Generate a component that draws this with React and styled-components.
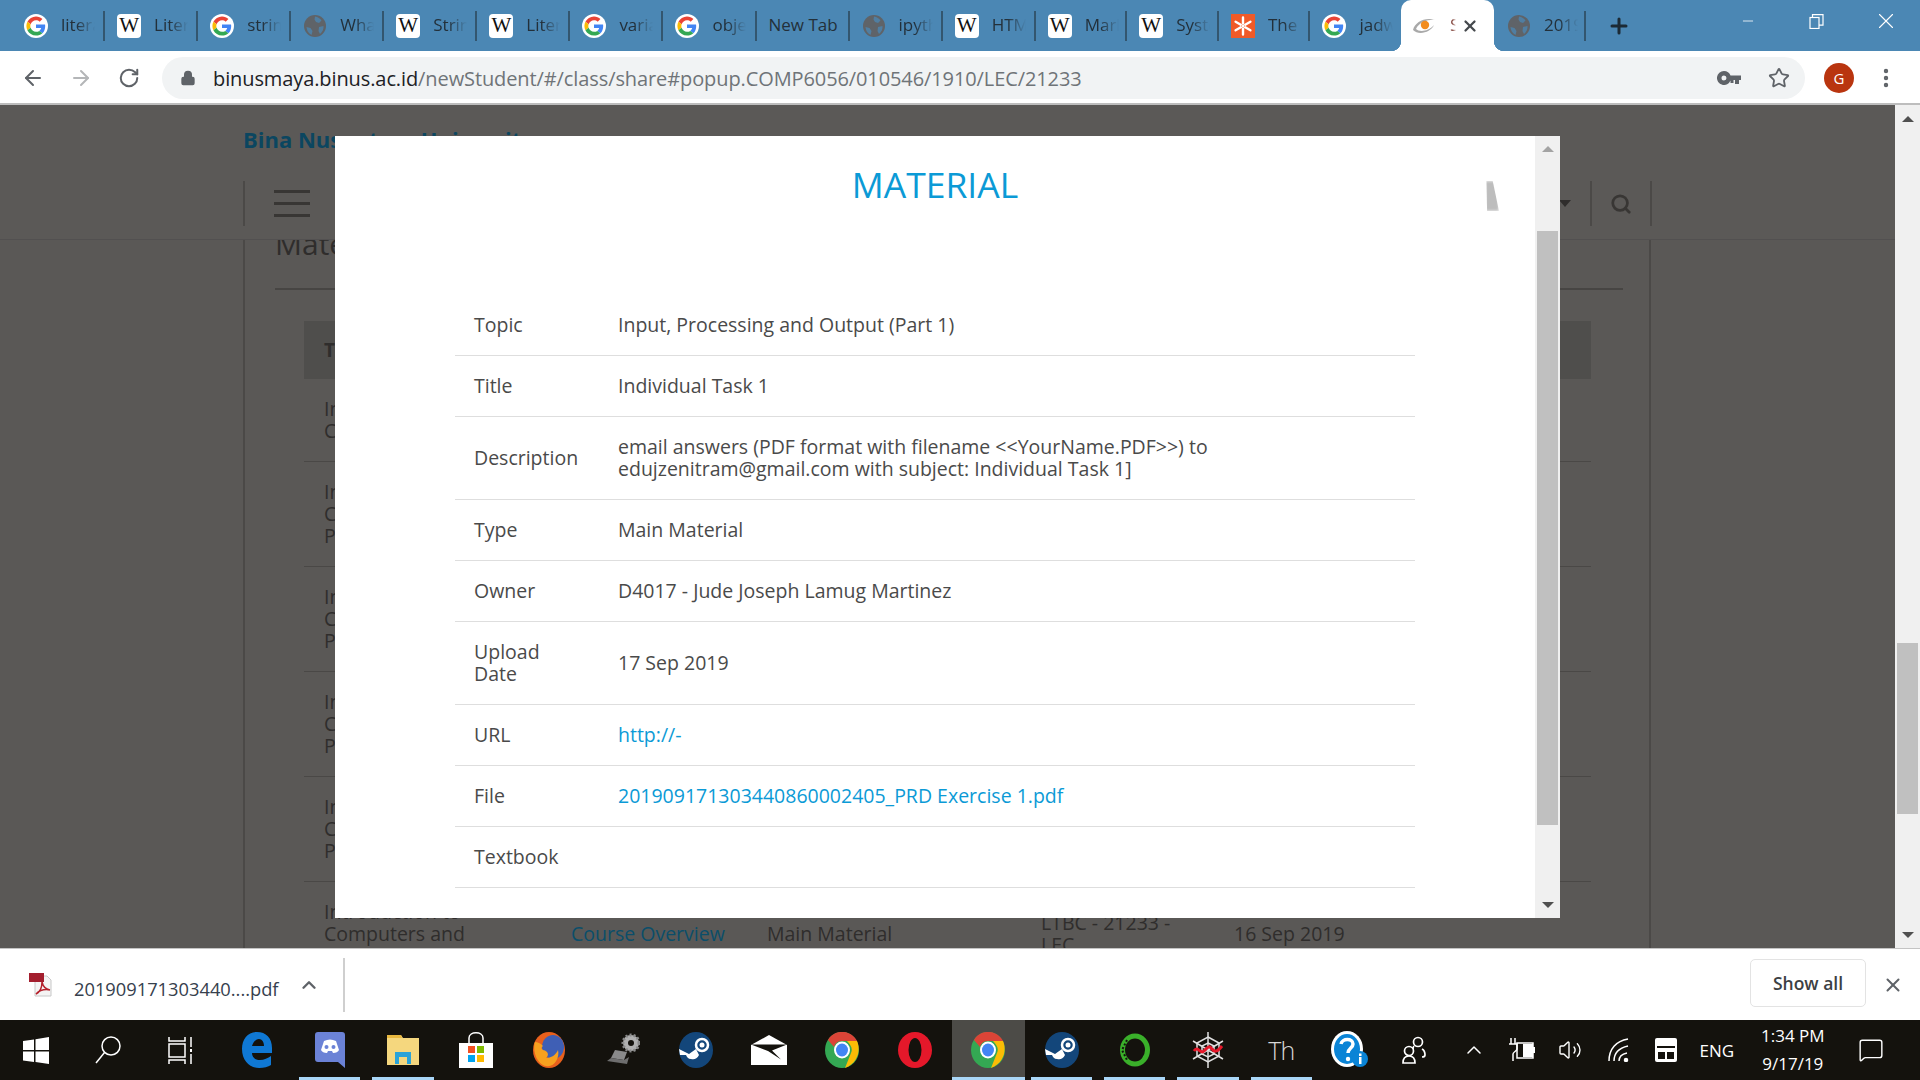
import React from 'react';
import styled, { createGlobalStyle } from 'styled-components';
import { ArrowLeft, ArrowRight, RotateCw, Lock, Star, X, Plus, Minus, ChevronUp, MoreVertical, Search, Volume2, MessageSquare } from 'lucide-react';

const GlobalStyle = createGlobalStyle`
    html, body {
        margin: 0;
        padding: 0;
        width: 1920px;
        height: 1080px;
        overflow: hidden;
        font-family: "Open Sans", "Noto Sans", sans-serif;
    }
    * { box-sizing: border-box; }
`;

const Screen = styled.div`
    display: flex;
    flex-direction: column;
    width: 1920px;
    height: 1080px;
`;

/* ---------- browser tabs ---------- */

const TabStrip = styled.div`
    display: flex;
    align-items: stretch;
    height: 51px;
    padding-left: 12px;
    background: #4b87b4;
    color: #23303a;
`;

const Tab = styled.div`
    display: flex;
    align-items: center;
    flex: none;
    width: ${p => p.$w}px;
    padding-left: 12px;
    font-size: 17px;
    white-space: nowrap;
    position: relative;

    &::after {
        content: '';
        position: absolute;
        right: 0;
        top: 11px;
        bottom: 10px;
        width: 2px;
        background: ${p => p.$noSep ? 'transparent' : '#33566f'};
    }
`;

const ActiveTab = styled.div`
    display: flex;
    align-items: center;
    flex: none;
    width: 93px;
    margin-left: -1px;
    margin-right: 1px;
    padding-left: 10px;
    background: #fff;
    border-radius: 10px 10px 0 0;
    position: relative;
    font-size: 17px;
    color: #8a5048;

    &::before, &::after {
        content: '';
        position: absolute;
        bottom: 0;
        width: 10px;
        height: 10px;
    }
    &::before {
        left: -10px;
        background: radial-gradient(circle at 0 0, #4b87b4 10px, #fff 10.5px);
    }
    &::after {
        right: -10px;
        background: radial-gradient(circle at 100% 0, #4b87b4 10px, #fff 10.5px);
    }
`;

const TabText = styled.span`
    display: block;
    flex: none;
    width: ${p => p.$w || 34}px;
    margin-left: ${p => p.$noIcon ? 0 : 13}px;
    padding-bottom: 2px;
    overflow: hidden;
    -webkit-mask-image: ${p => p.$noFade ? 'none' : 'linear-gradient(to right, #000 45%, transparent 100%)'};
`;

const NewTabButton = styled.div`
    display: flex;
    align-items: center;
    margin-left: 21px;
    color: #1c2a35;
`;

const WindowControls = styled.div`
    display: flex;
    align-items: center;
    margin-left: auto;
    padding-bottom: 9px;
    color: #fff;
`;

const WindowButton = styled.div`
    display: flex;
    justify-content: center;
    width: 69px;
`;

const WikiIcon = styled.span`
    display: flex;
    align-items: center;
    justify-content: center;
    flex: none;
    width: 24px;
    height: 24px;
    background: #fff;
    border-radius: 4px;
    color: #111;
    font-family: "Liberation Serif", serif;
    font-size: 21px;
    line-height: 1;
`;

const GoogleIcon = ({ size = 24 }) => (
    <svg width={size} height={size} viewBox="-6 -6 60 60" style={{ flex: 'none' }}>
        <circle cx="24" cy="24" r="30" fill="#fff" />
        <path fill="#EA4335" d="M24 9.5c3.54 0 6.71 1.22 9.21 3.6l6.85-6.85C35.9 2.38 30.47 0 24 0 14.62 0 6.51 5.38 2.56 13.22l7.98 6.19C12.43 13.72 17.74 9.5 24 9.5z" />
        <path fill="#4285F4" d="M46.98 24.55c0-1.57-.15-3.09-.38-4.55H24v9.02h12.94c-.58 2.96-2.26 5.48-4.78 7.18l7.73 6c4.51-4.18 7.09-10.36 7.09-17.65z" />
        <path fill="#FBBC05" d="M10.53 28.59c-.48-1.45-.76-2.99-.76-4.59s.27-3.14.76-4.59l-7.98-6.19C.92 16.46 0 20.12 0 24c0 3.88.92 7.54 2.56 10.78l7.97-6.19z" />
        <path fill="#34A853" d="M24 48c6.48 0 11.93-2.13 15.89-5.81l-7.73-6c-2.15 1.45-4.92 2.3-8.16 2.3-6.26 0-11.57-4.22-13.47-9.91l-7.98 6.19C6.51 42.62 14.62 48 24 48z" />
    </svg>
);

const GlobeIcon = () => (
    <svg width="24" height="24" viewBox="0 0 24 24" style={{ flex: 'none' }}>
        <circle cx="12" cy="12" r="11" fill="#5f6368" />
        <path d="M12 2.500c3 .6 5 2 6.500 4l-2.500 2.500-3-1-1.500-2.500zM16 13l4.500-1c.3 3-1 6-3.500 8l-1.500-3zM3.500 13l4 1 2 3-1 4c-3-1.500-4.800-4.500-5-8z" fill="#4b87b4" opacity="0.75" />
    </svg>
);

const SnowflakeIcon = () => (
    <svg width="24" height="24" viewBox="0 0 24 24" style={{ flex: 'none' }}>
        <rect width="24" height="24" fill="#f05a28" />
        <path d="M12 3.500v6M12 14.500v6M4.600 7.700l5.200 3M14.200 13.300l5.200 3M19.400 7.700l-5.200 3M9.800 13.300l-5.200 3" stroke="#fff" strokeWidth="2.400" strokeLinecap="round" />
        <circle cx="12" cy="12" r="1.200" fill="#fff" />
    </svg>
);

const BinusIcon = () => (
    <svg width="26" height="24" viewBox="0 0 26 24" style={{ flex: 'none' }}>
        <path d="M2 16C4 8 14 3 24 6c-6-1-16 2-19 9 3 3 12 3 18-4-3 7-15 11-21 5z" fill="#a9a9a9" />
        <circle cx="14" cy="11" r="4.200" fill="#f28c1e" />
    </svg>
);

const tabs = [
    { icon: 'g', text: 'literal' }, { icon: 'w', text: 'Literal' }, { icon: 'g', text: 'string' },
    { icon: 'o', text: 'What' }, { icon: 'w', text: 'String' }, { icon: 'w', text: 'Literal' },
    { icon: 'g', text: 'variable' }, { icon: 'g', text: 'object' }, { text: 'New Tab' },
    { icon: 'o', text: 'ipython' }, { icon: 'w', text: 'HTML' }, { icon: 'w', text: 'Markup', n: 1 },
    { icon: 'w', text: 'System', n: 1 }, { icon: 's', text: 'The', n: 1 }, { icon: 'g', text: 'jadwal', n: 1, noSep: true },
];

const TabIcon = ({ kind }) => {
    if (kind === 'g') return <GoogleIcon />;
    if (kind === 'w') return <WikiIcon>W</WikiIcon>;
    if (kind === 'o') return <GlobeIcon />;
    if (kind === 's') return <SnowflakeIcon />;
    return null;
};

/* ---------- address bar ---------- */

const Toolbar = styled.div`
    display: flex;
    align-items: center;
    height: 54px;
    padding: 2px 0 0 9px;
    background: #fff;
    border-bottom: 2px solid #bdbdbd;
`;

const NavButton = styled.div`
    display: flex;
    justify-content: center;
    width: 48px;
    color: ${p => p.$off ? '#b4b6b8' : '#5f6368'};
`;

const Omnibox = styled.div`
    display: flex;
    align-items: center;
    width: 1643px;
    height: 42px;
    margin-left: 9px;
    padding: 0 15px 0 18px;
    border-radius: 21px;
    background: #f1f3f4;
    color: #5f6368;
`;

const Url = styled.div`
    margin-left: 17px;
    font-size: 20px;
    letter-spacing: -0.1px;
    color: #6f7478;
    white-space: nowrap;

    b {
        font-weight: 400;
        color: #202124;
    }
`;

const OmniboxIcons = styled.div`
    display: flex;
    align-items: center;
    gap: 27px;
    margin-left: auto;
`;

const Avatar = styled.div`
    display: flex;
    align-items: center;
    justify-content: center;
    width: 30px;
    height: 30px;
    margin-left: 19px;
    border-radius: 50%;
    background: #b9350f;
    color: #fff;
    font-size: 15px;
`;

const Kebab = styled.div`
    display: flex;
    margin-left: 20px;
    color: #5f6368;
`;

/* ---------- dimmed page behind the modal ---------- */

const PageArea = styled.div`
    display: flex;
    flex: 1;
    min-height: 0;
    position: relative;
`;

const PageBody = styled.div`
    display: flex;
    flex-direction: column;
    flex: 1;
    min-width: 0;
    overflow: hidden;
    background: #5a5856;
    color: #2f2d2c;
`;

const SiteHeader = styled.div`
    flex: none;
    height: 135px;
    padding: 20px 0 0 243px;
    position: relative;
    z-index: 1;
    background: #5b5957;
    border-bottom: 1px solid #525050;
`;

const Brand = styled.div`
    font-size: 22px;
    font-weight: 700;
    line-height: 28px;
    color: #0b4660;
`;

const HeaderBar = styled.div`
    display: flex;
    align-items: center;
    height: 45px;
    margin-top: 28px;
`;

const HeaderSep = styled.div`
    flex: none;
    width: 2px;
    height: 45px;
    margin-left: ${p => p.$ml || 0}px;
    background: #4b4947;
`;

const Burger = styled.div`
    display: flex;
    flex-direction: column;
    justify-content: space-between;
    width: 36px;
    height: 27px;
    margin-left: 29px;

    i {
        display: block;
        height: 3px;
        background: #383634;
    }
`;

const Caret = styled.div`
    width: 0;
    height: 0;
    margin-left: 1249px;
    border-left: 6px solid transparent;
    border-right: 6px solid transparent;
    border-top: 7px solid #2f2d2c;
`;

const HeaderIcon = styled.div`
    display: flex;
    margin: 0 18px 0 18px;
    color: #383634;
`;

const Content = styled.div`
    flex: 1;
    width: 1408px;
    margin-left: 243px;
    padding: 0 26px 0 30px;
    border-left: 2px solid #4b4947;
    border-right: 2px solid #4b4947;
`;

const Heading = styled.div`
    margin-top: -25px;
    padding-bottom: 15px;
    font-size: 30px;
    line-height: 58px;
    color: #2f2d2c;
    border-bottom: 2px solid #474543;
`;

const MaterialTable = styled.div`
    width: 1287px;
    margin: 31px 0 0 29px;
`;

const TableHead = styled.div`
    display: flex;
    align-items: center;
    height: 58px;
    padding-left: 20px;
    background: #4f4e4c;
    font-size: 19px;
    font-weight: 700;
`;

const TableRow = styled.div`
    display: grid;
    grid-template-columns: 247px 196px 274px 193px 1fr;
    align-items: center;
    height: ${p => p.$h}px;
    padding-left: 20px;
    border-bottom: 1px solid #4a4846;
    font-size: 19.5px;
    line-height: 22px;
`;

const TopicCell = styled.div`
    width: 150px;
`;

const PageLink = styled.span`
    color: #0b4e6a;
`;

const Scrollbar = styled.div`
    display: flex;
    flex-direction: column;
    align-items: center;
    flex: none;
    width: 25px;
    background: #f0f0f0;
    position: relative;
`;

const Thumb = styled.div`
    position: absolute;
    left: 2px;
    right: 2px;
    top: ${p => p.$top}px;
    height: ${p => p.$h}px;
    background: #c0c0c0;
`;

const Arrow = styled.div`
    position: absolute;
    ${p => p.$up ? 'top' : 'bottom'}: ${p => p.$at}px;
    width: 0;
    height: 0;
    border-left: 6px solid transparent;
    border-right: 6px solid transparent;
    ${p => p.$up ? 'border-bottom' : 'border-top'}: 6px solid ${p => p.$c};
`;

/* ---------- modal ---------- */

const Modal = styled.div`
    display: flex;
    position: absolute;
    left: 335px;
    top: 31px;
    width: 1225px;
    height: 782px;
    z-index: 2;
    background: #fff;
    color: #4a4a4a;
`;

const ModalBody = styled.div`
    flex: 1;
    padding: 23px 120px 0;
    position: relative;
`;

const ModalTitle = styled.h1`
    margin: 0 0 86px;
    font-size: 35.5px;
    font-weight: 400;
    line-height: 50px;
    text-align: center;
    color: #0b9ad6;
`;

const CloseGhost = styled.div`
    position: absolute;
    left: 1150px;
    top: 45px;
    width: 14px;
    height: 30px;
    background: #bdbdbd;
    clip-path: polygon(10% 0, 55% 0, 100% 100%, 15% 100%);
    filter: blur(1.5px);
`;

const Row = styled.div`
    display: grid;
    grid-template-columns: 163px 1fr;
    align-items: center;
    padding: 19px 0;
    border-bottom: 1px solid #dedede;
    font-size: 19.5px;
    line-height: 22px;
`;

const Label = styled.div`
    padding: 0 45px 0 19px;
`;

const Value = styled.div`
    max-width: 640px;
`;

const FileLink = styled.a`
    color: #0b9ad6;
    text-decoration: none;
`;

const details = [
    ['Topic', 'Input, Processing and Output (Part 1)'],
    ['Title', 'Individual Task 1'],
    ['Description', 'email answers (PDF format with filename <<YourName.PDF>>) to edujzenitram@gmail.com with subject: Individual Task 1]'],
    ['Type', 'Main Material'],
    ['Owner', 'D4017 - Jude Joseph Lamug Martinez'],
    ['Upload Date', '17 Sep 2019'],
    ['URL', 'http://-', true],
    ['File', '201909171303440860002405_PRD Exercise 1.pdf', true],
    ['Textbook', ''],
];

/* ---------- download bar ---------- */

const DownloadBar = styled.div`
    display: flex;
    align-items: center;
    flex: none;
    height: 72px;
    background: #fff;
    color: #3c4043;
    border-top: 1px solid #c4c4c4;
`;

const DownloadItem = styled.div`
    display: flex;
    align-items: center;
    width: 345px;
    height: 54px;
    padding-left: 29px;
    border-right: 2px solid #cfcfcf;
    font-size: 18.3px;
`;

const DownloadName = styled.span`
    margin-left: 21px;
    color: #36404d;
    padding-top: 8px;
`;

const DownloadChevron = styled.span`
    display: flex;
    margin-left: 19px;
    color: #5f6368;
`;

const ShowAll = styled.button`
    width: 116px;
    height: 48px;
    margin: 0 0 3px auto;
    border: 1px solid #e3e3e3;
    border-radius: 5px;
    background: #fff;
    color: #3c4043;
    font-family: inherit;
    font-size: 17.5px;
    font-weight: 600;
`;

const DownloadClose = styled.div`
    display: flex;
    justify-content: center;
    width: 54px;
    color: #5f6368;
`;

/* ---------- windows taskbar ---------- */

const Taskbar = styled.div`
    display: flex;
    align-items: center;
    flex: none;
    height: 60px;
    background: #14120d;
    color: #fff;
`;

const TaskSlot = styled.div`
    display: flex;
    align-items: center;
    justify-content: center;
    flex: none;
    width: ${p => p.$w || 73.2}px;
    height: 60px;
    position: relative;
    background: ${p => p.$active ? '#4c4b47' : 'transparent'};

    &::after {
        content: '';
        display: ${p => p.$running ? 'block' : 'none'};
        position: absolute;
        bottom: 0;
        left: ${p => p.$active ? 0 : 6}px;
        right: ${p => p.$active ? 0 : 6}px;
        height: 3px;
        background: #a9d6f7;
    }
`;

const TaskGap = styled.div`
    flex: none;
    width: 4px;
`;

const ThLabel = styled.span`
    font-size: 25px;
    font-weight: 300;
    letter-spacing: -1px;
    color: #d8d8d8;
`;

const TrayText = styled.span`
    font-size: 17px;
    white-space: nowrap;
`;

const Clock = styled.div`
    display: flex;
    flex-direction: column;
    align-items: center;
    gap: 6px;
    font-size: 17px;
    line-height: 22px;
`;

const KeyGlyph = () => (
    <svg width="24" height="14" viewBox="0 0 24 14" fill="#5f6368"><path fillRule="evenodd" d="M7 0a7 7 0 0 1 6.500 4.500H24V9h-2v4h-4V9h-1.500v3h-3V9.500A7 7 0 1 1 7 0zm0 4.500a2.500 2.500 0 1 0 0 5 2.500 2.500 0 0 0 0-5z" /></svg>
);
const WinLogo = () => (
    <svg width="26" height="27" viewBox="0 0 26 27"><path fill="#fff" d="M0 4l11-1.600V13H0zM12.500 2.200L26 0v13H12.500zM0 14.500h11v10.600L0 23.500zM12.500 14.500H26V27l-13.500-2z" /></svg>
);
const SearchGlyph = () => (
    <svg width="26" height="28" viewBox="0 0 26 28" fill="none" stroke="#fff" strokeWidth="1.500"><circle cx="16" cy="10" r="9" /><path d="M9.500 16.500L1 27" /></svg>
);
const TaskView = () => (
    <svg width="24" height="27" viewBox="0 0 24 27" fill="none" stroke="#fff" strokeWidth="1.500"><path d="M1 0v4h16V0M1 27v-4h16v4" /><rect x="1" y="7" width="16" height="13" /><path d="M23 0v10M23 17v10" /><rect x="22" y="12" width="2" height="3" fill="#fff" stroke="none" /></svg>
);
const EdgeLogo = () => (
    <svg width="30" height="36" viewBox="0 0 30 36"><path fill="#0f78d4" d="M15 0C6 0 0 7 0 17c0 12 8 19 17 19 5 0 9-1 12-3v-9c-3 2-7 4-11 4-5 0-8-3-8-7h20v-5C30 6 24 0 15 0zm-5 14c1-4 4-7 7-7 3 0 5 3 5 7z" /></svg>
);
const DiscordLogo = () => (
    <svg width="30" height="36" viewBox="0 0 30 36"><path fill="#6b82d6" d="M3 0h24a3 3 0 0 1 3 3v33l-7-6H3a3 3 0 0 1-3-3V3a3 3 0 0 1 3-3z" /><path fill="#fff" d="M9 9c4-2 8-2 12 0l3 9c-1 2-3 3-6 3l-1-2h-4l-1 2c-3 0-5-1-6-3z" /><circle cx="11.500" cy="15" r="2" fill="#6b82d6" /><circle cx="18.500" cy="15" r="2" fill="#6b82d6" /></svg>
);
const ExplorerLogo = () => (
    <svg width="32" height="30" viewBox="0 0 32 30"><path fill="#f5d77e" d="M0 0h14l2 3h16v27H0z" /><path fill="#e8b83f" d="M0 0h14l1 3H0z" /><path fill="#2aa3d8" d="M8 29V17h16v12h-4v-7h-8v7z" /></svg>
);
const StoreLogo = () => (
    <svg width="34" height="36" viewBox="0 0 34 36"><path fill="none" stroke="#fff" strokeWidth="1.500" d="M10 11V6c0-7 14-7 14 0v5" /><rect y="11" width="34" height="25" fill="#fff" /><rect x="9" y="14" width="7" height="7" fill="#f25022" /><rect x="18" y="14" width="7" height="7" fill="#7fba00" /><rect x="9" y="23" width="7" height="7" fill="#00a4ef" /><rect x="18" y="23" width="7" height="7" fill="#ffb900" /></svg>
);
const FirefoxLogo = () => (
    <svg width="34" height="36" viewBox="0 0 34 36"><ellipse cx="17" cy="18" rx="16" ry="18" fill="#e8601c" /><ellipse cx="21" cy="15" rx="11" ry="12" fill="#3f5fb5" /><path fill="#f7a11f" d="M3 10c3 0 5 1 8 4-2 1-2 3 0 4 6 1 6 6 3 8 5 0 10-3 12-8 2 8-4 18-12 16C6 33 0 20 3 10z" /></svg>
);
const LaptopGear = () => (
    <svg width="34" height="34" viewBox="0 0 34 34"><path fill="#8a8a8a" d="M9 17l12 2-3 8-13-2z" /><path fill="#6e6e6e" d="M5 25l13 2 5-3-2 7-20-3z" /><circle cx="25" cy="10" r="8" fill="#b0b0b0" stroke="#8a8a8a" strokeDasharray="2 2" strokeWidth="3" /><circle cx="25" cy="10" r="3" fill="#14120d" /></svg>
);
const SteamLogo = () => (
    <svg width="34" height="36" viewBox="0 0 34 36"><ellipse cx="17" cy="18" rx="17" ry="18" fill="#13467a" /><circle cx="23" cy="13" r="6" fill="none" stroke="#fff" strokeWidth="2.500" /><circle cx="23" cy="13" r="2.500" fill="#fff" /><path d="M0 17l10 5 7-5 3 6c-2 4-5 5-8 4-3 0-4-2-5-4L1 23z" fill="#fff" /></svg>
);
const MailLogo = () => (
    <svg width="36" height="30" viewBox="0 0 36 30"><path fill="#fff" d="M18 0l18 10v20H0V10z" /><path fill="#14120d" d="M0 9.500h36l-15 6 9 9-13-8.500z" /></svg>
);
const ChromeLogo = () => (
    <svg width="34" height="36" viewBox="0 0 34 36"><ellipse cx="17" cy="18" rx="17" ry="18" fill="#34a853" /><path fill="#db4437" d="M3 8C9-3 26-3 32 9H17c-5 0-7 3-8 6z" /><path fill="#fbbc05" d="M32 9c4 9 1 22-12 27l6-15c2-4 0-8-4-12z" /><ellipse cx="17" cy="18" rx="8" ry="8.500" fill="#fff" /><ellipse cx="17" cy="18" rx="6" ry="6.500" fill="#4285f4" /></svg>
);
const OperaLogo = () => (
    <svg width="34" height="36" viewBox="0 0 34 36"><ellipse cx="17" cy="18" rx="17" ry="18" fill="#e5182a" /><ellipse cx="17" cy="18" rx="6.500" ry="12" fill="#14120d" /></svg>
);
const RingLogo = () => (
    <svg width="32" height="34" viewBox="0 0 32 34"><ellipse cx="16" cy="17" rx="12.500" ry="14" fill="none" stroke="#3ab02a" strokeWidth="5" /><path d="M8 7L3 17l5 10" fill="none" stroke="#14120d" strokeWidth="2" strokeDasharray="2 2" /></svg>
);
const SpiderLogo = () => (
    <svg width="34" height="36" viewBox="0 0 34 36" fill="none" stroke="#e0e0e0" strokeWidth="1.500"><path d="M17 0v36M2 9l30 18M32 9L2 27" /><path d="M17 5l11 6v13l-11 6-11-6V11zM17 11l6 3v8l-6 3-6-3v-8z" /><path d="M3 19c4-6 6 4 10 0s5-6 8-2 6 2 10-3" stroke="#e5182a" strokeWidth="3" /></svg>
);
const HelpLogo = () => (
    <svg width="38" height="38" viewBox="0 0 38 38"><ellipse cx="17" cy="18" rx="16" ry="18" fill="#fff" /><ellipse cx="17" cy="18" rx="13" ry="15" fill="#0a84d6" /><path d="M11 13c1-6 12-6 12 0 0 4-5 4-5 9" fill="none" stroke="#fff" strokeWidth="3.500" /><circle cx="18" cy="28" r="2.200" fill="#fff" /><circle cx="30" cy="28" r="8" fill="#0a84d6" /><rect x="29" y="26" width="2.500" height="7" fill="#fff" /><rect x="29" y="22.500" width="2.500" height="2.500" fill="#fff" /></svg>
);
const PeopleGlyph = () => (
    <svg width="24" height="28" viewBox="0 0 24 28" fill="none" stroke="#fff" strokeWidth="1.700"><circle cx="16" cy="6" r="4.500" /><circle cx="7" cy="15" r="4.500" /><path d="M20 21c2 0 3-1 3-2 0-3-1-5-3-6M12 10c-1 1-1 2-1 3M1 27c0-4 2-7 6-7s6 3 6 7z" /></svg>
);
const BatteryGlyph = () => (
    <svg width="26" height="24" viewBox="0 0 26 24" fill="none" stroke="#fff" strokeWidth="1.500"><path d="M2 0v6M6 0v6M0 6h8v5c0 2-4 3-4 5v7" /><rect x="8" y="5" width="16" height="15" /><rect x="14" y="6" width="10" height="13" fill="#fff" stroke="none" /><rect x="24" y="9" width="2" height="6" fill="#fff" stroke="none" /></svg>
);
const WifiGlyph = () => (
    <svg width="22" height="24" viewBox="0 0 22 24" fill="none" stroke="#fff" strokeWidth="1.500"><path d="M1 23C1 11 8 3 20 1M6 23c0-8 5-13 14-15M11 23c0-4 3-7 8-8" /><circle cx="18" cy="22" r="1.500" fill="#fff" /></svg>
);
const InputBox = () => (
    <svg width="22" height="24" viewBox="0 0 22 24"><rect width="22" height="24" rx="2" fill="#fff" /><rect x="2" y="8" width="18" height="2" fill="#14120d" /><rect x="3" y="14" width="7" height="7" fill="#14120d" /><rect x="12" y="14" width="7" height="7" fill="#14120d" /></svg>
);
const PdfIcon = () => (
    <svg width="24" height="24" viewBox="0 0 24 24" style={{ flex: 'none' }}>
        <path fill="#f4f4f4" stroke="#c8c8c8" d="M6 3h12l4 4v16H6z" />
        <path fill="none" stroke="#b5202b" strokeWidth="1.500" d="M7 21c4-2 6-7 6-12 1 5 3 7 8 8-5-1-10 0-14 4z" />
        <rect x="0" y="0" width="15" height="9" fill="#a31e2e" />
    </svg>
);

const row = [
    { h: 83, t: 'Introduction to Computers' },
    { h: 105, t: 'Introduction to Computers and Programming' },
    { h: 105, t: 'Introduction to Computers and Programming' },
    { h: 105, t: 'Introduction to Computers and Programming' },
    { h: 105, t: 'Introduction to Computers and Programming' },
];

const App = () => {
    return (
        <Screen>
            <GlobalStyle />
            <TabStrip>
                {tabs.map((t, i) => (
                    <Tab key={i} $w={t.n ? 91.6 : 93.07} $noSep={t.noSep}>
                        <TabIcon kind={t.icon} />
                        <TabText $noIcon={!t.icon} $w={t.icon ? 34 : 72} $noFade={!t.icon}>{t.text}</TabText>
                    </Tab>
                ))}
                <ActiveTab>
                    <BinusIcon />
                    <TabText $w={6}>S</TabText>
                    <X size={18} strokeWidth={3} color="#45494d" style={{ marginLeft: 5 }} />
                </ActiveTab>
                <Tab $w={91}>
                    <GlobeIcon />
                    <TabText>2019</TabText>
                </Tab>
                <NewTabButton><Plus size={24} strokeWidth={3} /></NewTabButton>
                <WindowControls>
                    <WindowButton><Minus size={16} strokeWidth={1.2} /></WindowButton>
                    <WindowButton>
                        <svg width="15" height="15" viewBox="0 0 15 15" fill="none" stroke="#fff" strokeWidth="1.200"><rect x="1" y="3.500" width="9" height="11" /><path d="M3.500 3.500V.6H14v10.500h-4" /></svg>
                    </WindowButton>
                    <WindowButton><X size={26} strokeWidth={1} /></WindowButton>
                </WindowControls>
            </TabStrip>

            <Toolbar>
                <NavButton><ArrowLeft size={24} strokeWidth={2} /></NavButton>
                <NavButton $off><ArrowRight size={24} strokeWidth={2} /></NavButton>
                <NavButton><RotateCw size={22} strokeWidth={2.2} /></NavButton>
                <Omnibox>
                    <Lock size={16} fill="#5f6368" />
                    <Url><b>binusmaya.binus.ac.id</b>/newStudent/#/class/share#popup.COMP6056/010546/1910/LEC/21233</Url>
                    <OmniboxIcons>
                        <KeyGlyph />
                        <Star size={22} strokeWidth={2} />
                    </OmniboxIcons>
                </Omnibox>
                <Avatar>G</Avatar>
                <Kebab><MoreVertical size={24} strokeWidth={2.4} /></Kebab>
            </Toolbar>

            <PageArea>
                <PageBody>
                    <SiteHeader>
                        <Brand>Bina Nusantara University</Brand>
                        <HeaderBar>
                            <HeaderSep />
                            <Burger><i /><i /><i /></Burger>
                            <Caret />
                            <HeaderSep $ml={19} />
                            <HeaderIcon><Search size={22} strokeWidth={3} /></HeaderIcon>
                            <HeaderSep />
                        </HeaderBar>
                    </SiteHeader>
                    <Content>
                        <Heading>Material</Heading>
                        <MaterialTable>
                            <TableHead>Topic</TableHead>
                            {row.map((r, i) => (
                                <TableRow key={i} $h={r.h}>
                                    <TopicCell>{r.t}</TopicCell>
                                </TableRow>
                            ))}
                            <TableRow $h={105}>
                                <TopicCell>Introduction to Computers and Programming</TopicCell>
                                <PageLink>Course Overview</PageLink>
                                <span>Main Material</span>
                                <TopicCell>LTBC - 21233 - LEC</TopicCell>
                                <span>16 Sep 2019</span>
                            </TableRow>
                        </MaterialTable>
                    </Content>
                </PageBody>
                <Scrollbar>
                    <Arrow $up $at={11} $c="#505050" />
                    <Thumb $top={538} $h={171} />
                    <Arrow $at={10} $c="#505050" />
                </Scrollbar>

                <Modal>
                    <ModalBody>
                        <ModalTitle>MATERIAL</ModalTitle>
                        <CloseGhost />
                        {details.map(([label, value, link]) => (
                            <Row key={label}>
                                <Label>{label}</Label>
                                <Value>{link ? <FileLink href="#">{value}</FileLink> : (value || '\u00a0')}</Value>
                            </Row>
                        ))}
                    </ModalBody>
                    <Scrollbar>
                        <Arrow $up $at={10} $c="#a3a3a3" />
                        <Thumb $top={95} $h={594} />
                        <Arrow $at={10} $c="#505050" />
                    </Scrollbar>
                </Modal>
            </PageArea>

            <DownloadBar>
                <DownloadItem>
                    <PdfIcon />
                    <DownloadName>201909171303440....pdf</DownloadName>
                    <DownloadChevron><ChevronUp size={22} strokeWidth={2.6} /></DownloadChevron>
                </DownloadItem>
                <ShowAll>Show all</ShowAll>
                <DownloadClose><X size={22} strokeWidth={2.2} /></DownloadClose>
            </DownloadBar>

            <Taskbar>
                <TaskSlot $w={72}><WinLogo /></TaskSlot>
                <TaskSlot $w={72}><SearchGlyph /></TaskSlot>
                <TaskSlot $w={72}><TaskView /></TaskSlot>
                <TaskGap />
                <TaskSlot><EdgeLogo /></TaskSlot>
                <TaskSlot $running><DiscordLogo /></TaskSlot>
                <TaskSlot $running><ExplorerLogo /></TaskSlot>
                <TaskSlot><StoreLogo /></TaskSlot>
                <TaskSlot><FirefoxLogo /></TaskSlot>
                <TaskSlot><LaptopGear /></TaskSlot>
                <TaskSlot><SteamLogo /></TaskSlot>
                <TaskSlot><MailLogo /></TaskSlot>
                <TaskSlot><ChromeLogo /></TaskSlot>
                <TaskSlot><OperaLogo /></TaskSlot>
                <TaskSlot $running $active><ChromeLogo /></TaskSlot>
                <TaskSlot $running><SteamLogo /></TaskSlot>
                <TaskSlot $running><RingLogo /></TaskSlot>
                <TaskSlot $running><SpiderLogo /></TaskSlot>
                <TaskSlot $running><ThLabel>Th</ThLabel></TaskSlot>
                <TaskSlot $w={62}><HelpLogo /></TaskSlot>
                <TaskSlot $w={68}><PeopleGlyph /></TaskSlot>
                <TaskSlot $w={52}><ChevronUp size={24} strokeWidth={1.5} /></TaskSlot>
                <TaskSlot $w={44}><BatteryGlyph /></TaskSlot>
                <TaskSlot $w={52}><Volume2 size={24} strokeWidth={1.4} /></TaskSlot>
                <TaskSlot $w={46}><WifiGlyph /></TaskSlot>
                <TaskSlot $w={48}><InputBox /></TaskSlot>
                <TaskSlot $w={54}><TrayText>ENG</TrayText></TaskSlot>
                <TaskSlot $w={98}>
                    <Clock><span>1:34 PM</span><span>9/17/19</span></Clock>
                </TaskSlot>
                <TaskSlot $w={58}><MessageSquare size={26} strokeWidth={1.3} /></TaskSlot>
            </Taskbar>
        </Screen>
    );
};

export default App;
